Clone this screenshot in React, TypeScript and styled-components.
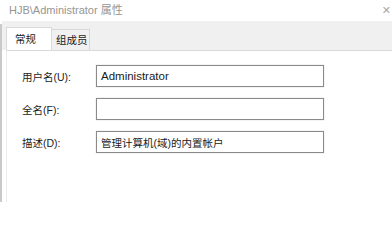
import React from 'react'
import styled, { createGlobalStyle } from 'styled-components'

const GlobalStyle = createGlobalStyle`
    html, body {
        margin: 0;
        padding: 0;
        background: #ffffff;
    }
    body {
        font-family: "Liberation Sans", "Noto Sans CJK SC", sans-serif;
        font-size: 12px;
        color: #1a1a1a;
    }
`

const Window = styled.div`
    width: 392px;
    height: 202px;
    overflow: hidden;
    display: flex;
    flex-direction: column;
    background: #ffffff;
`

const TitleBar = styled.div`
    height: 21px;
    flex: none;
    display: flex;
    align-items: center;
    justify-content: space-between;
    padding-left: 9px;
    padding-bottom: 3px;
    box-sizing: border-box;
    color: #959595;
    font-size: 11px;
    background: #ffffff;
`

const Close = styled.span`
    margin-right: 1px;
    margin-top: 2px;
    color: #a8a8a8;
    font-size: 11px;
    font-family: "DejaVu Sans", sans-serif;
`

const Body = styled.div`
    flex: 1;
    display: flex;
    flex-direction: column;
    border-left: 2px solid #c9c9c9;
    margin-top: 3px;
`

const TabStrip = styled.div`
    height: 29px;
    flex: none;
    display: flex;
    align-items: flex-end;
    padding-left: 4px;
    margin-top: -3px;
    background: #f0f0f0;
`

const Tab = styled.div<{ $active?: boolean }>`
    box-sizing: border-box;
    height: ${ props => props.$active ? '24px' : '21px' };
    width: ${ props => props.$active ? '46px' : '38px' };
    margin-bottom: ${ props => props.$active ? '-1px' : '0' };
    padding-left: ${ props => props.$active ? '8px' : '4px' };
    padding-top: ${ props => props.$active ? '4px' : '3px' };
    background: ${ props => props.$active ? '#ffffff' : '#f0f0f0' };
    border: 1px solid #d9d9d9;
    border-bottom: none;
    border-left-width: ${ props => props.$active ? '1px' : '0' };
    font-size: 10.5px;
    line-height: 14px;
    white-space: nowrap;
    color: #222;
`

const Panel = styled.div`
    flex: 1;
    margin-left: 4px;
    border-top: 1px solid #d9d9d9;
    border-left: 1px solid #ececec;
    background: #ffffff;
    padding: 14px 0 0 15px;
    display: grid;
    grid-template-columns: 74px 228px;
    grid-auto-rows: 22px;
    row-gap: 11px;
    align-content: start;
`

const Label = styled.label`
    display: flex;
    align-items: center;
    font-size: 10.5px;
    color: #222;
    white-space: nowrap;
`

const Field = styled.div<{ $size: number }>`
    box-sizing: border-box;
    border: 1px solid #8a8a8a;
    box-shadow: 0 0 1px rgba(0,0,0,0.25);
    display: flex;
    align-items: center;
    padding-left: 4px;
    font-size: ${ props => props.$size }px;
    color: #1a1a1a;
    white-space: nowrap;
`

const fields = [
    { label: '用户名(U):', value: 'Administrator', size: 11.5 },
    { label: '全名(F):', value: '', size: 11.5 },
    { label: '描述(D):', value: '管理计算机(域)的内置帐户', size: 10.5 },
]

const App: React.FC = () => {
    return (
        <Window>
            <GlobalStyle />
            <TitleBar>
                <span>HJB\Administrator 属性</span>
                <Close>✕</Close>
            </TitleBar>
            <Body>
                <TabStrip>
                    <Tab $active>常规</Tab>
                    <Tab>组成员</Tab>
                </TabStrip>
                <Panel>
                    { fields.map(f => (
                        <React.Fragment key={f.label}>
                            <Label>{f.label}</Label>
                            <Field $size={f.size}>{f.value}</Field>
                        </React.Fragment>
                    )) }
                </Panel>
            </Body>
        </Window>
    )
}

export default App
